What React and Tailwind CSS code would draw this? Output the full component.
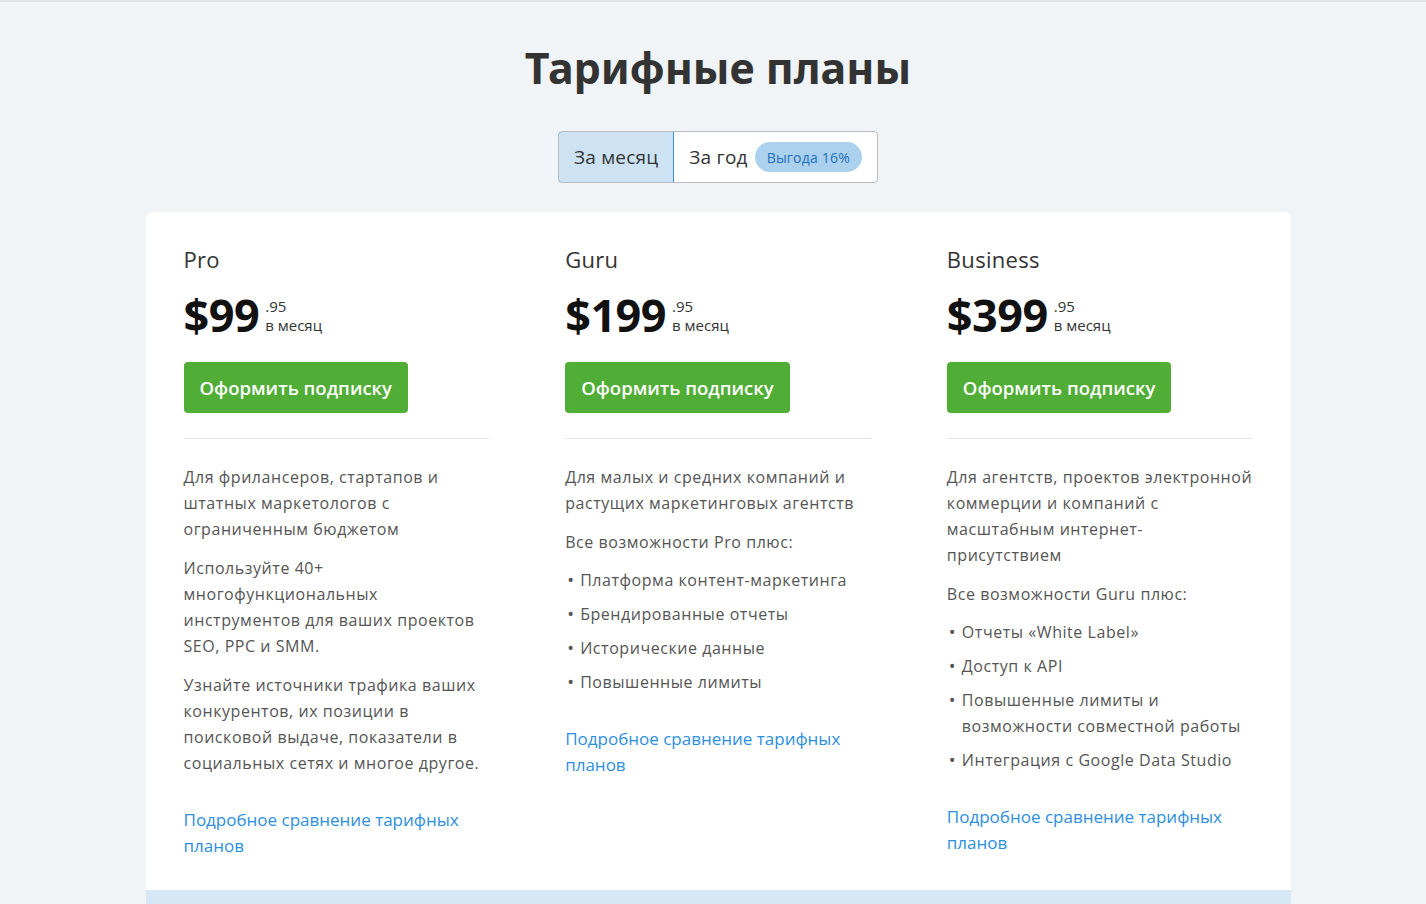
import React from 'react';

const plans = [
  {
    name: 'Pro',
    price: '$99',
    cents: '.95',
    paras: [
      'Для фрилансеров, стартапов и штатных маркетологов с ограниченным бюджетом',
      'Используйте 40+ многофункциональных инструментов для ваших проектов SEO, PPC и SMM.',
      'Узнайте источники трафика ваших конкурентов, их позиции в поисковой выдаче, показатели в социальных сетях и многое другое.',
    ],
    features: [],
  },
  {
    name: 'Guru',
    price: '$199',
    cents: '.95',
    paras: [
      'Для малых и средних компаний и растущих маркетинговых агентств',
      'Все возможности Pro плюс:',
    ],
    features: [
      'Платформа контент-маркетинга',
      'Брендированные отчеты',
      'Исторические данные',
      'Повышенные лимиты',
    ],
  },
  {
    name: 'Business',
    price: '$399',
    cents: '.95',
    paras: [
      'Для агентств, проектов электронной коммерции и компаний с масштабным интернет-присутствием',
      'Все возможности Guru плюс:',
    ],
    features: [
      'Отчеты «White Label»',
      'Доступ к API',
      'Повышенные лимиты и возможности совместной работы',
      'Интеграция с Google Data Studio',
    ],
  },
];

function PlanColumn({ plan }) {
  return (
    <div className="flex flex-col">
      <h3 className="text-[22px] leading-[28px] text-[#333] mt-[33px] tracking-[0.3px]">{plan.name}</h3>
      <div className="flex items-start mt-[18px]">
        <span className="text-[45px] leading-[48px] font-bold text-[#111] tracking-[-0.5px]">{plan.price}</span>
        <div className="flex flex-col ml-[6px] mt-[6px] text-[15px] leading-[19px] text-[#333]">
          <span>{plan.cents}</span>
          <span>в месяц</span>
        </div>
      </div>
      <button className="mt-[23px] self-start h-[51px] px-[16px] bg-[#50ad35] hover:bg-[#469c2d] text-white text-[18.5px] font-semibold rounded-[4px]">
        Оформить подписку
      </button>
      <div className="mt-[25px] border-t border-[#e2e4e6]" />
      <div className="mt-[25px] flex flex-col gap-[13px] text-[16px] leading-[26px] text-[#555] tracking-[0.55px]">
        {plan.paras.map((p, i) => (
          <p key={i}>{p}</p>
        ))}
      </div>
      {plan.features.length > 0 && (
        <ul className="mt-[12px] flex flex-col gap-[8px] text-[16px] leading-[26px] text-[#555] tracking-[0.55px]">
          {plan.features.map((f, i) => (
            <li key={i} className="flex">
              <span className="w-[15px] shrink-0 pl-[2px] text-[18px]">•</span>
              <span>{f}</span>
            </li>
          ))}
        </ul>
      )}
      <a href="#" className="mt-[31px] text-[17px] leading-[26px] text-[#2c8fe0] pr-[20px]">
        Подробное сравнение тарифных планов
      </a>
    </div>
  );
}

export default function App() {
  return (
    <div
      className="min-h-screen bg-[#f0f4f7] border-t-[2px] border-[#e1e5e9] pl-[10px]"
      style={{ fontFamily: '"Open Sans", "Noto Sans", sans-serif' }}
    >
      <h1
        className="text-center text-[43px] font-bold text-[#333] pt-[38px] leading-[56px]"
        style={{ fontFamily: '"Noto Sans", "Open Sans", sans-serif' }}
      >
        Тарифные планы
      </h1>
      <div className="flex justify-center mt-[35px]">
        <div className="flex h-[52px] rounded-[4px] border border-[#b8bcc0] bg-white overflow-hidden">
          <button className="px-[15px] bg-[#cde3f3] border border-[#3a8fd8] rounded-l-[4px] -m-[1px] text-[19px] text-[#333] tracking-[0.2px]">
            За месяц
          </button>
          <button className="flex items-center pl-[16px] pr-[15px] text-[19px] text-[#333] tracking-[0.2px]">
            За год
            <span className="ml-[7px] h-[30px] px-[12px] flex items-center rounded-full bg-[#abd1ee] text-[14px] text-[#1f70c1] tracking-[0.2px]">
              Выгода 16%
            </span>
          </button>
        </div>
      </div>
      <div className="mx-auto mt-[29px] w-[1145px] bg-white rounded-t-[6px]">
        <div className="grid grid-cols-3 gap-x-[76px] px-[38px] pb-[31px]">
          {plans.map((p) => (
            <PlanColumn key={p.name} plan={p} />
          ))}
        </div>
        <div className="h-[40px] bg-[#d6e8f5]" />
      </div>
    </div>
  );
}
